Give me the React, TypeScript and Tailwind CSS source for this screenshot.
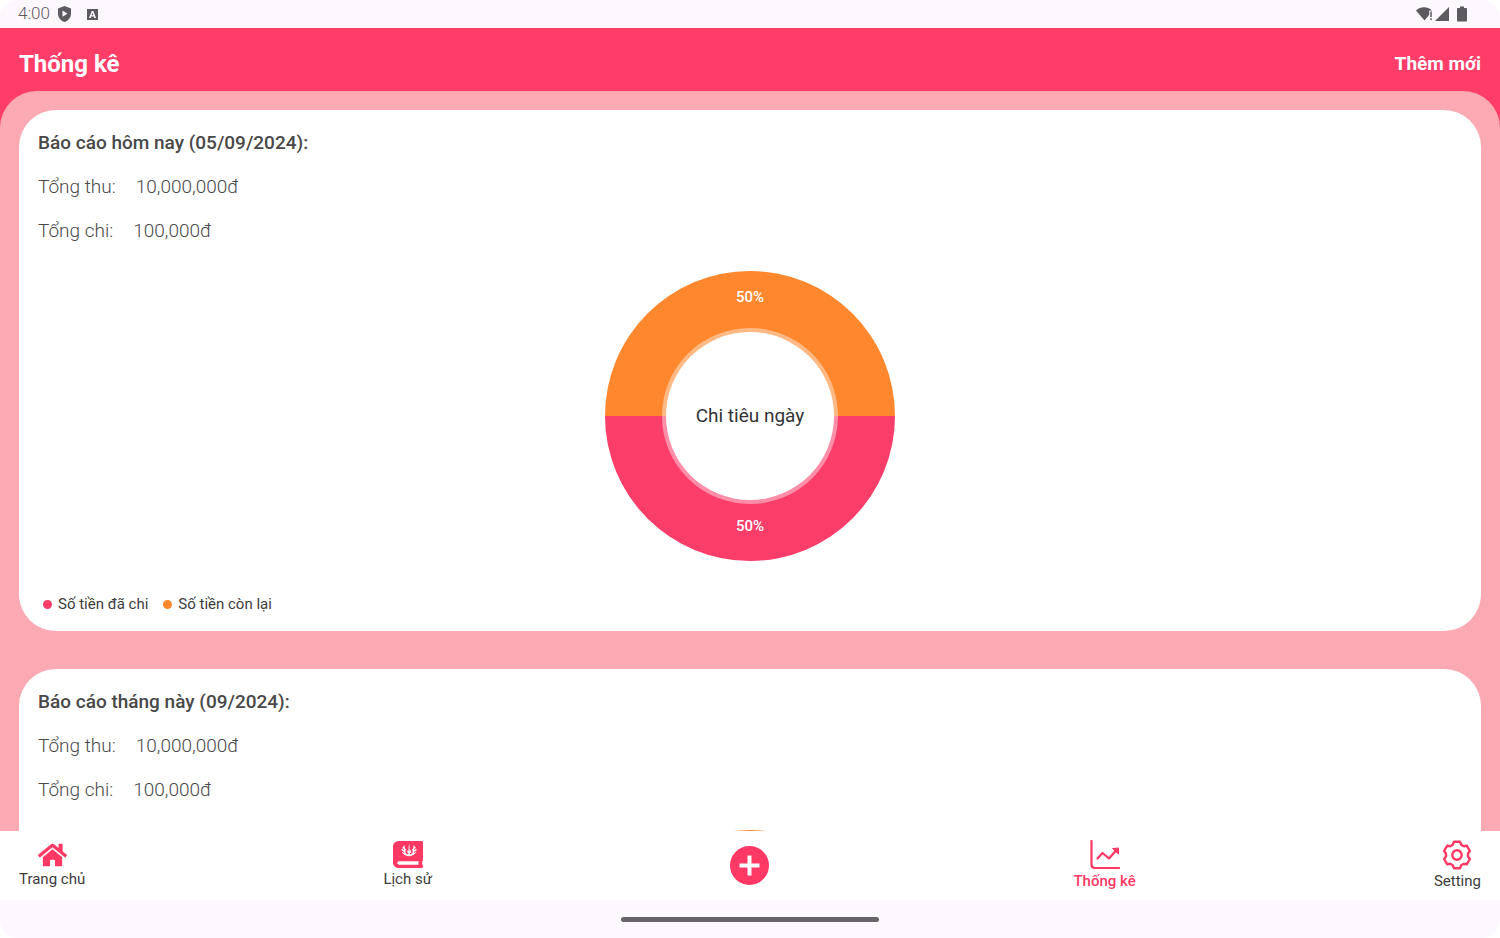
import type { ReactNode } from "react";
import { FaHome, FaJournalWhills } from "react-icons/fa";

const COLORS = {
  spent: "#fb3d6a",
  left: "#ff872e",
};

const REPORTS = [
  {
    title: "Báo cáo hôm nay (05/09/2024):",
    income: "10,000,000đ",
    expense: "100,000đ",
    label: "Chi tiêu ngày",
  },
  {
    title: "Báo cáo tháng này (09/2024):",
    income: "10,000,000đ",
    expense: "100,000đ",
    label: "Chi tiêu tháng",
  },
];

const StatusBar = () => (
  <div className="flex h-7 shrink-0 items-center justify-between pr-[33px] pl-[18px] text-[#5d5b60]">
    <div className="flex items-center">
      <span className="text-[17px] font-light">4:00</span>
      <svg className="ml-2 h-4 w-[13px]" viewBox="0 0 13 16" fill="currentColor">
        <path
          fillRule="evenodd"
          d="M6.5 0 13 2.5v5.3c0 3.7-2.6 6.9-6.5 8.2C2.6 14.7 0 11.5 0 7.8V2.5zM4.5 4.6v6.2l5-3.1z"
        />
      </svg>
      <svg className="ml-4 size-[11px]" viewBox="0 0 11 11" fill="currentColor">
        <path
          fillRule="evenodd"
          d="M0 0h11v11H0zM4.7 2 2 9h1.700l.5-1.500h2.600L7.300 9H9L6.300 2zM5.500 3.700l.8 2.500H4.700z"
        />
      </svg>
    </div>
    <div className="flex items-center">
      <svg className="h-4 w-[17px]" viewBox="0 0 17 16" fill="currentColor">
        <path d="M0 4.500C2.300 2.500 5 1.300 8 1.300s5.700 1.200 8 3.200h-2.800v4.200L8.500 14.500z" />
        <path d="M14.300 5.500h1.500v5.500h-1.500zM14.300 12.300h1.500v1.600h-1.500z" />
      </svg>
      <svg className="ml-0.5 size-[14px]" viewBox="0 0 14 14" fill="currentColor">
        <path d="M14 0v14H0z" />
      </svg>
      <svg className="ml-2 h-4 w-[10px]" viewBox="0 0 10 16" fill="currentColor">
        <path d="M3 .5h4V2h2c.6 0 1 .4 1 1v11.500c0 .6-.4 1-1 1H1c-.6 0-1-.4-1-1V3c0-.6.4-1 1-1h2z" />
      </svg>
    </div>
  </div>
);

const DonutChart = ({ label }: { label: string }) => (
  <svg className="mx-auto mt-7 size-[290px]" viewBox="0 0 290 290" textAnchor="middle">
    <path d="M0 145a145 145 0 0 1 290 0z" fill={COLORS.left} />
    <path d="M0 145a145 145 0 0 0 290 0z" fill={COLORS.spent} />
    <circle cx="145" cy="145" r="88" fill="#fff" fillOpacity="0.42" />
    <circle cx="145" cy="145" r="84" fill="#fff" />
    <text x="145" y="31" className="fill-white text-[15px] font-medium">50%</text>
    <text x="145" y="151" className="fill-[#333333] text-[19px]">{label}</text>
    <text x="145" y="260" className="fill-white text-[15px] font-medium">50%</text>
  </svg>
);

const ReportCard = ({ title, income, expense, label }: (typeof REPORTS)[number]) => (
  <section className="shrink-0 rounded-[37px] bg-white px-[19px] pt-[21px] pb-[18px]">
    <div className="flex flex-col gap-5 text-[19px] leading-6 text-[#484848]">
      <h2 className="font-medium">{title}</h2>
      <p className="flex gap-5 font-light">
        <span>Tổng thu:</span>
        <span>{income}</span>
      </p>
      <p className="flex gap-5 font-light">
        <span>Tổng chi:</span>
        <span>{expense}</span>
      </p>
    </div>
    <DonutChart label={label} />
    <ul className="mt-[34px] ml-[5px] flex gap-[15px] text-[15px] leading-[18px] text-[#3c3c3c]">
      <li className="flex items-center gap-1.5">
        <i className="size-[9px] rounded-full bg-[#fb3d6a]" />
        Số tiền đã chi
      </li>
      <li className="flex items-center gap-1.5">
        <i className="size-[9px] rounded-full bg-[#ff872e]" />
        Số tiền còn lại
      </li>
    </ul>
  </section>
);

const NavItem = ({ icon, label, active }: { icon: ReactNode; label: string; active?: boolean }) => (
  <a href="#" className="flex flex-col items-center gap-px text-[#ff3864]">
    {icon}
    <span className={active ? "font-medium" : "text-[#3c3c3c]"}>{label}</span>
  </a>
);

const ChartIcon = () => (
  <svg className="size-[30px]" viewBox="0 0 30 30" fill="none" stroke="currentColor" strokeWidth="2.2">
    <path d="M1.500 1v23.500c0 2.200 1.300 3.500 3.500 3.500h24" strokeLinecap="round" />
    <path d="m7.500 18.500 5-5.500 6.500 5.500 7-8" strokeLinecap="round" strokeLinejoin="round" />
    <path d="m22.500 8.500 6-.5v6z" fill="currentColor" strokeWidth="1" />
  </svg>
);

const GearIcon = () => (
  <svg
    className="size-[30px]"
    viewBox="-15 -15 30 30"
    fill="none"
    stroke="currentColor"
    strokeWidth="2.4"
    strokeLinejoin="round"
  >
    <path d="M-3-13.200H3L4.200-10.300 6.800-8.800 9.900-9.200 12.900-4 11-1.500V1.500L12.900 4 9.900 9.200 6.800 8.800 4.200 10.300 3 13.200H-3L-4.200 10.300-6.800 8.800-9.900 9.200-12.900 4-11 1.500V-1.500L-12.900-4-9.900-9.200-6.800-8.800-4.200-10.300z" />
    <circle r="4.7" />
  </svg>
);

const BottomNav = () => (
  <nav className="flex h-[69px] shrink-0 items-center justify-between bg-white px-[19px] pb-px text-[15px] leading-5">
    <NavItem label="Trang chủ" icon={<FaHome className="h-[26px] w-[29px]" />} />
    <NavItem
      label="Lịch sử"
      icon={<FaJournalWhills className="h-[27px] w-[30px]" preserveAspectRatio="none" />}
    />
    <button type="button" aria-label="Thêm giao dịch" className="pr-1.5">
      <svg className="size-[39px]" viewBox="0 0 39 39">
        <circle cx="19.5" cy="19.5" r="19.5" fill="#ff3864" />
        <path d="M19.500 9.500v20M9.500 19.500h20" stroke="#fff" strokeWidth="4" />
      </svg>
    </button>
    <NavItem active label="Thống kê" icon={<ChartIcon />} />
    <NavItem label="Setting" icon={<GearIcon />} />
  </nav>
);

const App = () => {
  return (
    <div className="flex h-screen flex-col overflow-hidden rounded-[18px] bg-[#fdf7ff] font-['Roboto',sans-serif]">
      <StatusBar />
      <div className="flex min-h-0 flex-1 flex-col bg-[#ff3d68]">
        <header className="flex h-[63px] shrink-0 items-center justify-between px-[19px] pt-2 font-bold text-white">
          <h1 className="text-2xl">Thống kê</h1>
          <button type="button" className="text-[19px] leading-[30px] font-bold">
            Thêm mới
          </button>
        </header>
        <main className="flex min-h-0 flex-1 flex-col gap-[38px] overflow-y-auto rounded-t-[37px] bg-[#fba9b2] px-[19px] py-[19px] [scrollbar-width:none]">
          {REPORTS.map((report) => (
            <ReportCard key={report.title} {...report} />
          ))}
        </main>
      </div>
      <BottomNav />
      <div className="flex h-[38px] shrink-0 items-center justify-center">
        <div className="h-[5px] w-[258px] rounded-full bg-[#68646b]" />
      </div>
    </div>
  );
};

export default App;
